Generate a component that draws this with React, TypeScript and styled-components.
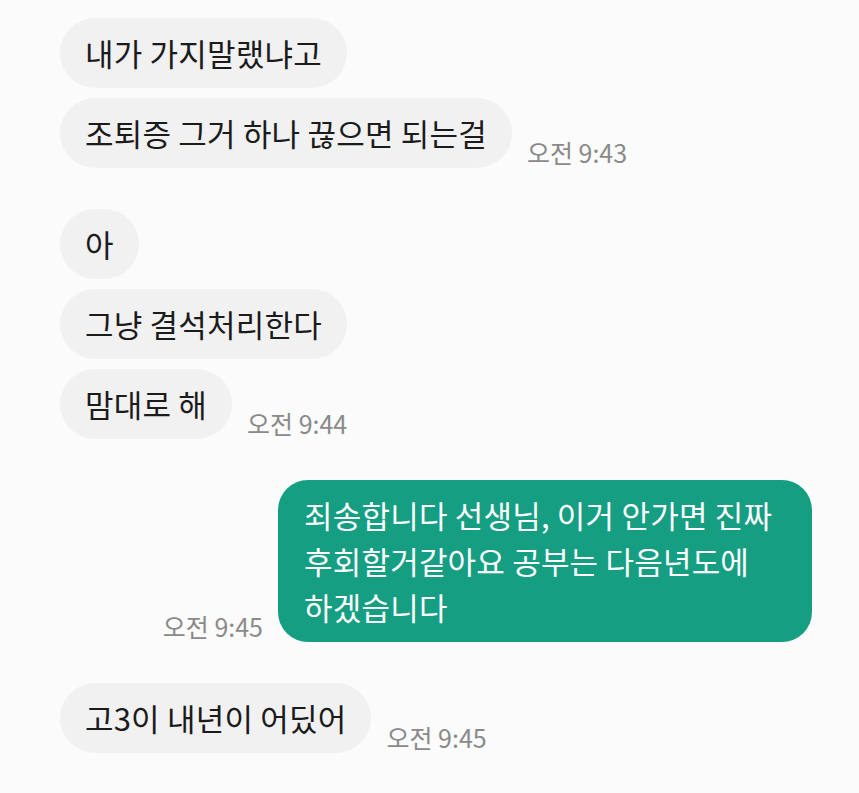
import React from "react";
import styled, { createGlobalStyle } from "styled-components";

const Global = createGlobalStyle`
  html, body { margin: 0; padding: 0; background: #fbfbfc; }
  body { font-family: "Noto Sans CJK KR", "Noto Sans", sans-serif; }
`;

const Screen = styled.div`
  width: 859px;
  height: 793px;
  box-sizing: border-box;
  padding: 18px 47px 0 60px;
  display: flex;
  flex-direction: column;
  gap: 41px;
  overflow: hidden;
`;

const Group = styled.div`
  display: flex;
  flex-direction: column;
  gap: 10px;
`;

const Row = styled.div<{ $mine?: boolean }>`
  display: flex;
  align-items: flex-end;
  justify-content: ${(p) => (p.$mine ? "flex-end" : "flex-start")};
  gap: 15px;
`;

const Bubble = styled.div<{ $mine?: boolean }>`
  box-sizing: border-box;
  padding: ${(p) => (p.$mine ? "12px 26px" : "12px 25px")};
  border-radius: ${(p) => (p.$mine ? "30px" : "35px")};
  background: ${(p) => (p.$mine ? "#159e82" : "#f1f1f2")};
  color: ${(p) => (p.$mine ? "#ffffff" : "#1b1b1b")};
  font-size: 31px;
  letter-spacing: 0.2px;
  line-height: 46px;
  max-width: ${(p) => (p.$mine ? "534px" : "none")};
  white-space: ${(p) => (p.$mine ? "normal" : "nowrap")};
  word-break: keep-all;
`;

const Time = styled.span`
  font-size: 25px;
  line-height: 1;
  color: #8a8a8a;
  white-space: nowrap;
  margin-bottom: 3px;
`;

export default function App() {
  return (
    <>
      <Global />
      <Screen>
        <Group>
          <Row>
            <Bubble>내가 가지말랬냐고</Bubble>
          </Row>
          <Row>
            <Bubble>조퇴증 그거 하나 끊으면 되는걸</Bubble>
            <Time>오전 9:43</Time>
          </Row>
        </Group>
        <Group>
          <Row>
            <Bubble>아</Bubble>
          </Row>
          <Row>
            <Bubble>그냥 결석처리한다</Bubble>
          </Row>
          <Row>
            <Bubble>맘대로 해</Bubble>
            <Time>오전 9:44</Time>
          </Row>
        </Group>
        <Group>
          <Row $mine>
            <Time>오전 9:45</Time>
            <Bubble $mine>
              죄송합니다 선생님, 이거 안가면 진짜 후회할거같아요 공부는 다음년도에 하겠습니다
            </Bubble>
          </Row>
        </Group>
        <Group>
          <Row>
            <Bubble>고3이 내년이 어딨어</Bubble>
            <Time>오전 9:45</Time>
          </Row>
        </Group>
      </Screen>
    </>
  );
}
